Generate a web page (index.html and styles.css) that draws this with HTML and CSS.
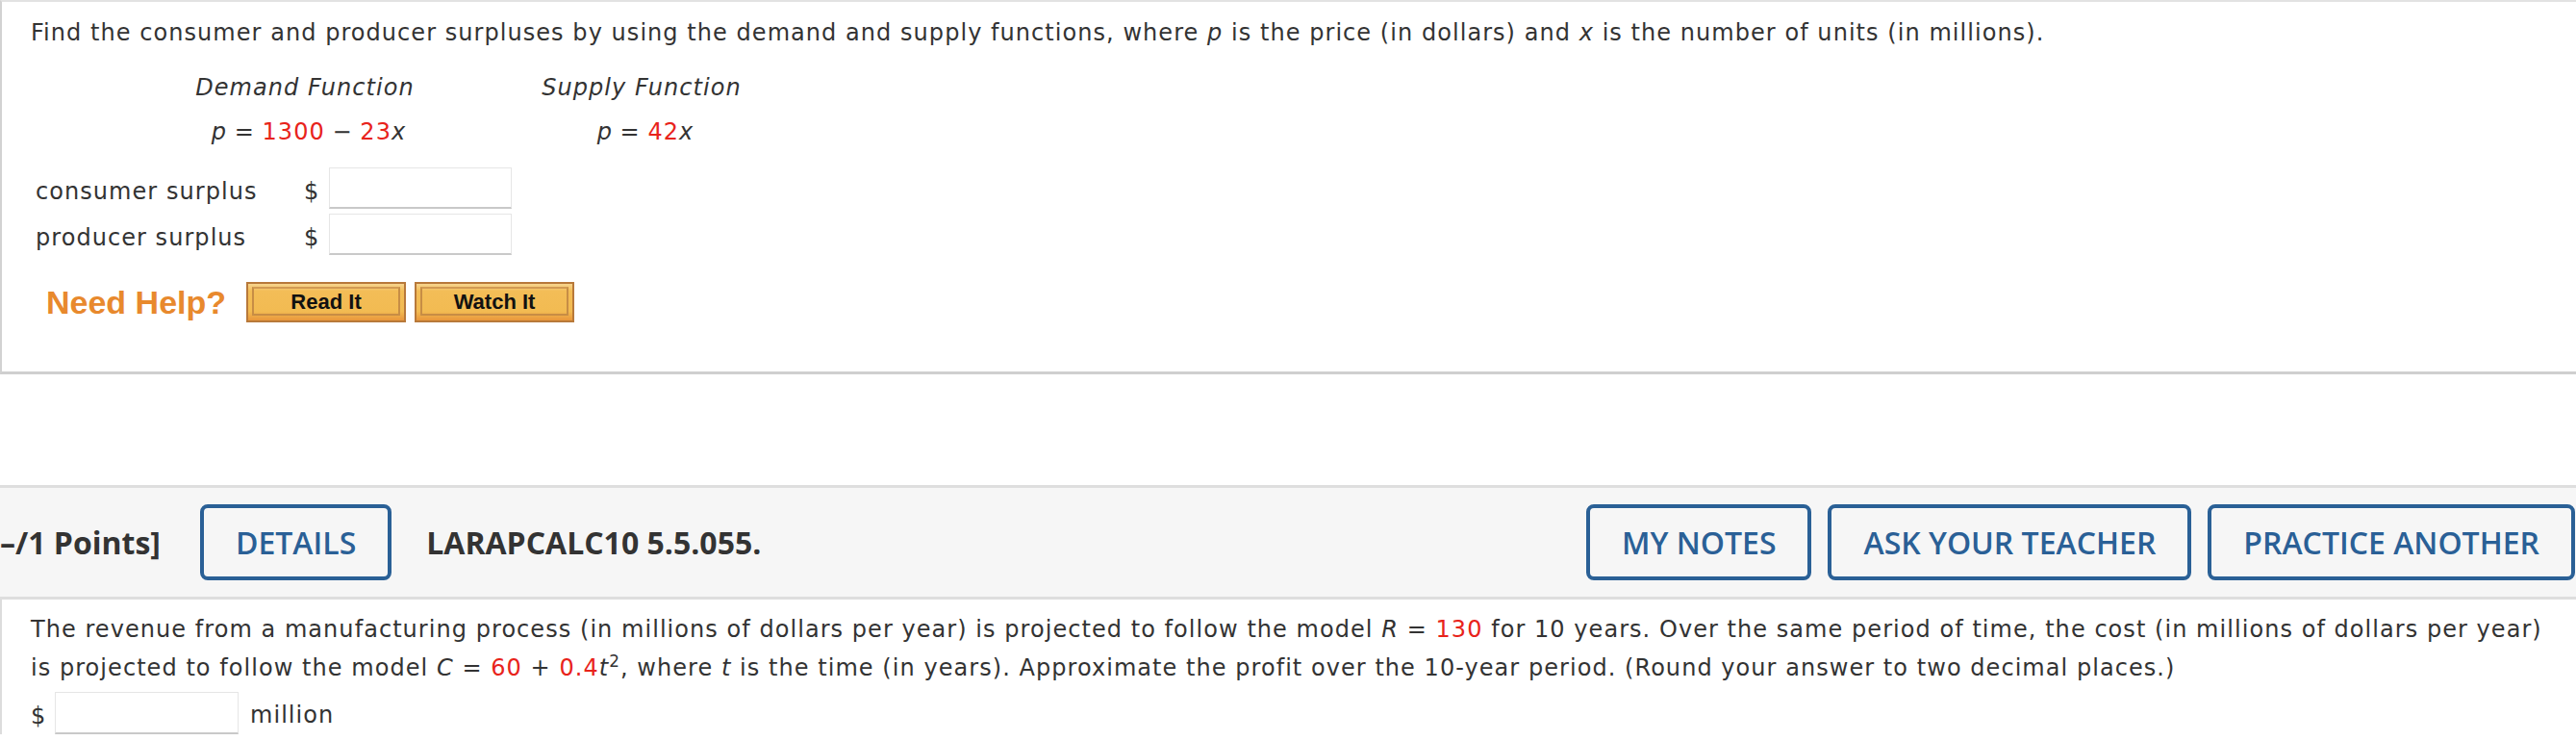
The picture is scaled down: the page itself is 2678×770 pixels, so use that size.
FILE: index.html
```html
<!DOCTYPE html>
<html>
<head>
<meta charset="utf-8">
<link rel="stylesheet" href="styles.css">
</head>
<body>
<section class="q-box q-first">
  <p class="intro">Find the consumer and producer surpluses by using the demand and supply functions, where <i>p</i> is the price (in dollars) and <i>x</i> is the number of units (in millions).</p>
  <div class="func-grid">
    <div class="func-cell"><i>Demand Function</i></div>
    <div class="func-cell"><i>Supply Function</i></div>
    <div class="func-cell eq"><i>p</i> = <span class="red">1300</span> &minus; <span class="red">23</span><i>x</i></div>
    <div class="func-cell eq"><i>p</i> = <span class="red">42</span><i>x</i></div>
  </div>
  <div class="answers">
    <div class="ans-row">
      <span class="ans-label">consumer surplus</span>
      <span class="dollar">$</span>
      <span class="ans-input"></span>
    </div>
    <div class="ans-row">
      <span class="ans-label">producer surplus</span>
      <span class="dollar">$</span>
      <span class="ans-input"></span>
    </div>
  </div>
  <div class="help-row">
    <span class="need-help">Need Help?</span>
    <span class="help-btn"><span class="help-inner">Read It</span></span>
    <span class="help-btn"><span class="help-inner">Watch It</span></span>
  </div>
</section>

<header class="q-header">
  <span class="points">&ndash;/1 Points]</span>
  <span class="hbtn">DETAILS</span>
  <span class="qid">LARAPCALC10 5.5.055.</span>
  <div class="hbtn-group">
    <span class="hbtn">MY NOTES</span>
    <span class="hbtn">ASK YOUR TEACHER</span>
    <span class="hbtn hbtn-last">PRACTICE ANOTHER</span>
  </div>
</header>

<section class="q-box q-second">
  <p class="body-text">The revenue from a manufacturing process (in millions of dollars per year) is projected to follow the model <i>R</i> = <span class="red">130</span> for 10 years. Over the same period of time, the cost (in millions of dollars per year) is projected to follow the model <i>C</i> = <span class="red">60</span> + <span class="red">0.4</span><i>t</i><sup>2</sup>, where <i>t</i> is the time (in years). Approximate the profit over the 10-year period. (Round your answer to two decimal places.)</p>
  <div class="final-row">
    <span class="dollar-b">$</span>
    <span class="ans-input final-input"></span>
    <span class="unit">million</span>
  </div>
</section>
</body>
</html>
```

FILE: styles.css
```css
* { box-sizing: border-box; }
html, body { margin: 0; padding: 0; background: #fff; }
body {
  font-family: "DejaVu Sans", Verdana, sans-serif;
  font-size: 24px;
  letter-spacing: 1.05px;
  color: #333;
  width: 2678px;
  overflow: hidden;
}
.red { color: #e8231b; }
i { font-style: italic; }

.q-box {
  border-left: 2px solid #d2d2d2;
  padding-left: 30px;
}
.q-first {
  border-top: 2px solid #e2e2e2;
  border-bottom: 3px solid #cfcfcf;
  height: 389px;
  padding-top: 12px;
}
.intro {
  margin: 0;
  line-height: 40px;
}
.func-grid {
  display: grid;
  grid-template-columns: 350px 350px;
  grid-auto-rows: 46px;
  margin: 14px 0 0 110px;
}
.func-cell {
  text-align: center;
  line-height: 46px;
}
.func-cell.eq {
  word-spacing: -1px;
  padding-left: 8px;
}
.answers {
  margin-top: 14px;
  display: flex;
  flex-direction: column;
  gap: 5px;
}
.ans-row {
  display: flex;
  align-items: center;
  height: 43px;
}
.ans-label {
  width: 279px;
  margin-left: 5px;
  padding-top: 6px;
}
.dollar {
  width: 26px;
  padding-top: 6px;
}
.ans-input {
  display: inline-block;
  width: 190px;
  height: 43px;
  background: #fff;
  border: 1px solid #e6e6e6;
  border-bottom: 2px solid #c9c9c9;
}
.help-row {
  display: flex;
  align-items: center;
  margin-top: 28px;
  margin-left: 16px;
  letter-spacing: 0;
}
.need-help {
  font-family: "Liberation Sans", Arial, sans-serif;
  font-weight: bold;
  font-size: 34px;
  color: #e8892d;
  margin-right: 21px;
}
.help-btn {
  display: inline-block;
  width: 166px;
  height: 42px;
  margin-right: 9px;
  border: 2px solid #b8793a;
  background: linear-gradient(#f7d58f 0, #f3bd57 20%, #f2bb52 75%, #e9963b 100%);
  padding: 3px 4px 5px 4px;
}
.help-inner {
  display: block;
  height: 100%;
  border: 2px solid #c78d45;
  border-top-color: #d29a52;
  font-family: "Liberation Sans", Arial, sans-serif;
  font-weight: bold;
  font-size: 22px;
  color: #111;
  text-align: center;
  line-height: 27px;
}

.q-header {
  margin-top: 115px;
  height: 119px;
  background: #f6f6f6;
  border-top: 3px solid #dedede;
  border-bottom: 3px solid #dedede;
  display: flex;
  align-items: center;
  font-family: "Open Sans", "DejaVu Sans", sans-serif;
  letter-spacing: 0;
}
.points {
  font-weight: 700;
  font-size: 32px;
  color: #333;
  margin-right: 41px;
}
.hbtn {
  display: inline-flex;
  align-items: center;
  height: 79px;
  padding: 0 33px;
  border: 4px solid #2a6096;
  border-radius: 8px;
  font-weight: 600;
  font-size: 32px;
  color: #2a6096;
}
.qid {
  font-weight: 700;
  font-size: 32px;
  color: #333;
  margin-left: 36px;
}
.hbtn-group {
  margin-left: auto;
  display: flex;
  gap: 17px;
  padding-right: 1px;
}

.q-second {
  border-left: 2px solid #dcdcdc;
  padding-top: 11px;
  padding-right: 15px;
}
.body-text {
  margin: 0;
  line-height: 40px;
}
.body-text sup {
  font-size: 70%;
  line-height: 0;
  vertical-align: 0.55em;
}
.final-row {
  display: flex;
  align-items: center;
  margin-top: 5px;
}
.dollar-b {
  width: 25px;
  padding-top: 6px;
}
.final-input {
  width: 191px;
  height: 44px;
}
.unit {
  margin-left: 12px;
  padding-top: 4px;
}
```
